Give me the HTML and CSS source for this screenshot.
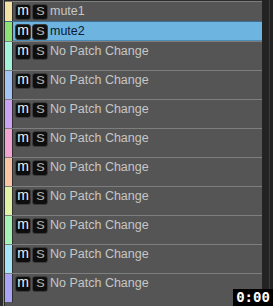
FILE: index.html
```html
<!DOCTYPE html>
<html>
<head>
<meta charset="utf-8">
<link rel="stylesheet" href="styles.css">
</head>
<body>
<div class="app">
  <div class="edge"></div>
  <div class="tracks">
    <div class="row short">
      <div class="strip c1"></div>
      <div class="body"><span class="btn m">m</span><span class="btn s"><span class="g">s</span></span><span class="label">mute1</span></div>
    </div>
    <div class="row short selected">
      <div class="strip c2"></div>
      <div class="body"><span class="btn m">m</span><span class="btn s"><span class="g">s</span></span><span class="label">mute2</span></div>
    </div>
    <div class="row">
      <div class="strip c3"></div>
      <div class="body"><span class="btn m">m</span><span class="btn s"><span class="g">s</span></span><span class="label">No Patch Change</span></div>
    </div>
    <div class="row">
      <div class="strip c4"></div>
      <div class="body"><span class="btn m">m</span><span class="btn s"><span class="g">s</span></span><span class="label">No Patch Change</span></div>
    </div>
    <div class="row">
      <div class="strip c5"></div>
      <div class="body"><span class="btn m">m</span><span class="btn s"><span class="g">s</span></span><span class="label">No Patch Change</span></div>
    </div>
    <div class="row">
      <div class="strip c6"></div>
      <div class="body"><span class="btn m">m</span><span class="btn s"><span class="g">s</span></span><span class="label">No Patch Change</span></div>
    </div>
    <div class="row">
      <div class="strip c7"></div>
      <div class="body"><span class="btn m">m</span><span class="btn s"><span class="g">s</span></span><span class="label">No Patch Change</span></div>
    </div>
    <div class="row">
      <div class="strip c8"></div>
      <div class="body"><span class="btn m">m</span><span class="btn s"><span class="g">s</span></span><span class="label">No Patch Change</span></div>
    </div>
    <div class="row">
      <div class="strip c9"></div>
      <div class="body"><span class="btn m">m</span><span class="btn s"><span class="g">s</span></span><span class="label">No Patch Change</span></div>
    </div>
    <div class="row">
      <div class="strip c10"></div>
      <div class="body"><span class="btn m">m</span><span class="btn s"><span class="g">s</span></span><span class="label">No Patch Change</span></div>
    </div>
    <div class="row">
      <div class="strip c11"></div>
      <div class="body"><span class="btn m">m</span><span class="btn s"><span class="g">s</span></span><span class="label">No Patch Change</span></div>
    </div>
  </div>
  <div class="scroll"><div class="scroll-line"></div></div>
  <div class="time">0:00</div>
</div>
</body>
</html>
```

FILE: styles.css
```css
html, body {
  margin: 0;
  padding: 0;
  background: #2a2a2a;
}

.app {
  position: relative;
  display: flex;
  width: 273px;
  height: 306px;
  overflow: hidden;
  background: #2c2c2c;
  font-family: "Liberation Sans", Arial, sans-serif;
}

.edge {
  width: 3px;
  flex: none;
  background: #2c2c2c;
  border-right: 1px solid #8a8a8a;
  margin-right: 1px;
}

.tracks {
  width: 257px;
  flex: none;
  display: flex;
  flex-direction: column;
  padding-top: 1px;
  background: #555555;
  box-shadow: inset 0 1px 0 #2c2c2c;
}

.row {
  display: flex;
  height: 28px;
  border-top: 1px solid #7e7e7e;
  background: #555555;
  flex: none;
}

.row.short {
  height: 19px;
}

.row.selected {
  background: #6db4e1;
  border-top-color: #3d6f92;
  box-shadow: inset 0 -1px 0 #4c8ab6;
}

.strip {
  width: 7px;
  flex: none;
  border-right: 1px solid #2e2e2e;
}

.c1 { background: #f2e2a4; }
.c2 { background: #8ae174; }
.c3 { background: #a4f2da; }
.c4 { background: #a4c2f2; }
.c5 { background: #caa4f2; }
.c6 { background: #f2a4d2; }
.c7 { background: #f8c4a4; }
.c8 { background: #e2f2a4; }
.c9 { background: #a4f2b6; }
.c10 { background: #a4e6f6; }
.c11 { background: #aaa4f6; }

.body {
  display: flex;
  align-items: flex-start;
  padding: 2px 0 0 2px;
  flex: 1;
  min-width: 0;
}

.btn {
  display: block;
  width: 14px;
  height: 14px;
  flex: none;
  background: #0e0e0e;
  border: 1px solid #3c3c3c;
  border-radius: 3px;
  font-family: "Liberation Sans", Arial, sans-serif;
  font-size: 14px;
  line-height: 10px;
  text-align: center;
  overflow: visible;
}

.btn.m {
  color: #f0f0f0;
  margin-right: 1px;
}

.btn.s {
  color: #a6a6a6;
}

.btn.s .g {
  display: inline-block;
  transform: scaleX(1.22);
}

.label {
  margin-left: 2px;
  font-size: 12.5px;
  line-height: 15px;
  color: #c6c6c6;
  white-space: nowrap;
}

.row.selected .label {
  color: #0b1a2e;
}

.scroll {
  width: 11px;
  flex: none;
  background: #232323;
  display: flex;
  justify-content: flex-end;
}

.scroll-line {
  width: 1px;
  height: 100%;
  background: #3c3c3c;
  margin-right: 3px;
}

.time {
  position: absolute;
  right: 0;
  bottom: 0;
  width: 40px;
  height: 17px;
  background: #000;
  color: #fff;
  font-family: "DejaVu Sans Mono", monospace;
  font-weight: bold;
  font-size: 14px;
  line-height: 17px;
  text-align: center;
}
```
